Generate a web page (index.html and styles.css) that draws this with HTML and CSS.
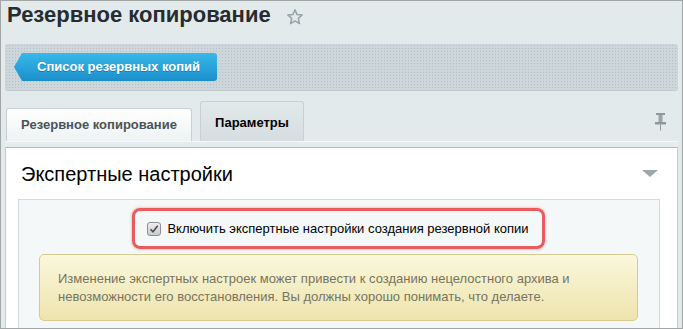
FILE: index.html
```html
<!DOCTYPE html>
<html lang="ru">
<head>
  <meta charset="UTF-8" />
  <meta name="viewport" content="width=device-width, initial-scale=1.0"/>
  <title>Резервное копирование</title>
  <link rel="stylesheet" href="styles.css">
</head>
<body>

  <div class="frame">
    <div class="title-row">
      <h1>Резервное копирование</h1>
      <svg class="star" width="16" height="16" viewBox="0 0 16 16">
        <path d="M8 0.8 L10.1 5.6 L15.2 6 L11.3 9.4 L12.5 14.6 L8 11.9 L3.5 14.6 L4.7 9.4 L0.8 6 L5.9 5.6 Z" fill="none" stroke="#97a2a6" stroke-width="1.5" stroke-linejoin="round"/>
      </svg>
    </div>

    <div class="toolbar">
      <a href="#" class="back-btn">Список резервных копий</a>
    </div>

    <div class="tabs">
      <div class="tab">Резервное копирование</div>
      <div class="tab tab-active">Параметры</div>
      <svg class="pin" width="11" height="18" viewBox="0 0 11 18">
        <rect x="1" y="0" width="9" height="2" fill="#8e999c"/>
        <rect x="3.5" y="2" width="4" height="8" fill="#9aa5a8"/>
        <rect x="0" y="9" width="11" height="2.5" fill="#8e999c"/>
        <rect x="5" y="11.5" width="1" height="6" fill="#8e999c"/>
      </svg>
    </div>
    <div class="tab-line"></div>

    <div class="panel">
      <div class="panel-head">
        <h2>Экспертные настройки</h2>
        <span class="collapse"></span>
      </div>

      <div class="options">
        <label class="expert-toggle">
          <span class="checkbox">
            <svg width="10" height="10" viewBox="0 0 10 10">
              <path d="M1.5 5.2 L4 7.8 L8.7 1.8" fill="none" stroke="#4d4d4d" stroke-width="1.6"/>
            </svg>
          </span>
          Включить экспертные настройки создания резервной копии
        </label>

        <div class="warning">
          Изменение экспертных настроек может привести к созданию нецелостного архива и<br>
          невозможности его восстановления. Вы должны хорошо понимать, что делаете.
        </div>
      </div>
    </div>
  </div>

</body>
</html>
```

FILE: styles.css
```css
body {
  margin: 0;
  padding: 0;
  font-family: 'Liberation Sans', Arial, sans-serif;
}

.frame {
  width: 683px;
  height: 329px;
  box-sizing: border-box;
  border: 1px solid #a2a6a7;
  padding: 0 4px;
  background-color: #e3eaeb;
  overflow: hidden;
}

.title-row {
  display: flex;
  align-items: flex-start;
  height: 43px;
}

h1 {
  margin: 0;
  padding: 1px 0 0 2px;
  font-size: 22px;
  line-height: 26px;
  font-weight: bold;
  color: #262c2f;
}

.star {
  margin: 8px 0 0 16px;
}

.toolbar {
  height: 47px;
  box-sizing: border-box;
  padding: 9px 0 0 9px;
  border-radius: 3px;
  background-color: #cdd6da;
  background-image: radial-gradient(#b7c1c5 0.7px, transparent 1px);
  background-size: 3px 3px;
  box-shadow: inset 0 -1px 0 #c0c9cc;
}

.back-btn {
  display: inline-block;
  height: 28px;
  box-sizing: border-box;
  padding: 0 17px 0 23px;
  line-height: 28px;
  font-size: 13px;
  font-weight: bold;
  color: #fff;
  text-decoration: none;
  text-shadow: 0 1px 0 rgba(0, 60, 100, 0.35);
  background: linear-gradient(to bottom, #38b8ea, #1b8fcb);
  border-radius: 0 3px 3px 0;
  clip-path: polygon(0 50%, 8px 0, 100% 0, 100% 100%, 8px 100%);
}

.tabs {
  display: flex;
  align-items: flex-end;
  height: 50px;
}

.tab {
  box-sizing: border-box;
  border: 1px solid #c8d0d3;
  border-bottom: none;
  border-radius: 3px 3px 0 0;
  font-size: 13px;
  font-weight: bold;
  text-align: center;
}

.tab:first-child {
  width: 186px;
  height: 33px;
  margin-left: 1px;
  line-height: 32px;
  color: #4a5357;
  background: linear-gradient(to bottom, #ffffff, #eef2f3);
}

.tab-active {
  width: 104px;
  height: 40px;
  margin-left: 8px;
  padding-top: 3px;
  line-height: 36px;
  color: #000;
  background: linear-gradient(to bottom, #e2e9eb, #d5dde0);
}

.pin {
  align-self: flex-start;
  margin: 22px 12px 0 auto;
}

.tab-line {
  height: 6px;
  box-sizing: border-box;
  border-top: 1px solid #f5f8f8;
  background-color: #e6ecee;
}

.panel {
  height: 200px;
  background-color: #fff;
  border: 1px solid #c3cccf;
  border-top-color: #b3bdc1;
  padding-top: 14px;
}

.panel-head {
  display: flex;
  justify-content: space-between;
  align-items: flex-start;
}

h2 {
  margin: 0;
  padding-left: 15px;
  font-size: 20px;
  line-height: 24px;
  font-weight: normal;
  color: #000;
}

.collapse {
  width: 0;
  height: 0;
  margin: 8px 19px 0 0;
  border-left: 8px solid transparent;
  border-right: 8px solid transparent;
  border-top: 7px solid #9ea7aa;
}

.options {
  margin: 13px 17px 0 12px;
  padding: 8px 21px 20px 20px;
  background-color: #f4f8f9;
  border: 1px solid #d2dce0;
}

.expert-toggle {
  display: flex;
  align-items: center;
  gap: 6px;
  width: fit-content;
  height: 41px;
  box-sizing: border-box;
  margin: 0 auto;
  padding: 0 13px 0 12px;
  border: 3px solid #eb5a5c;
  border-radius: 8px;
  box-shadow: 0 0 3px rgba(235, 90, 92, 0.6);
  font-size: 13px;
  color: #000;
}

.checkbox {
  display: flex;
  align-items: center;
  justify-content: center;
  width: 14px;
  height: 14px;
  box-sizing: border-box;
  border: 1px solid #8d8f90;
  border-radius: 3px;
  background: linear-gradient(to bottom, #eeeeee, #c9cbcc);
}

.warning {
  margin-top: 5px;
  padding: 15px 18px 14px 18px;
  border: 1px solid #d5cb92;
  border-radius: 5px;
  background: linear-gradient(to bottom, #fbf7dc, #ede4ae);
  font-size: 13px;
  line-height: 18px;
  color: #78745f;
}
```
